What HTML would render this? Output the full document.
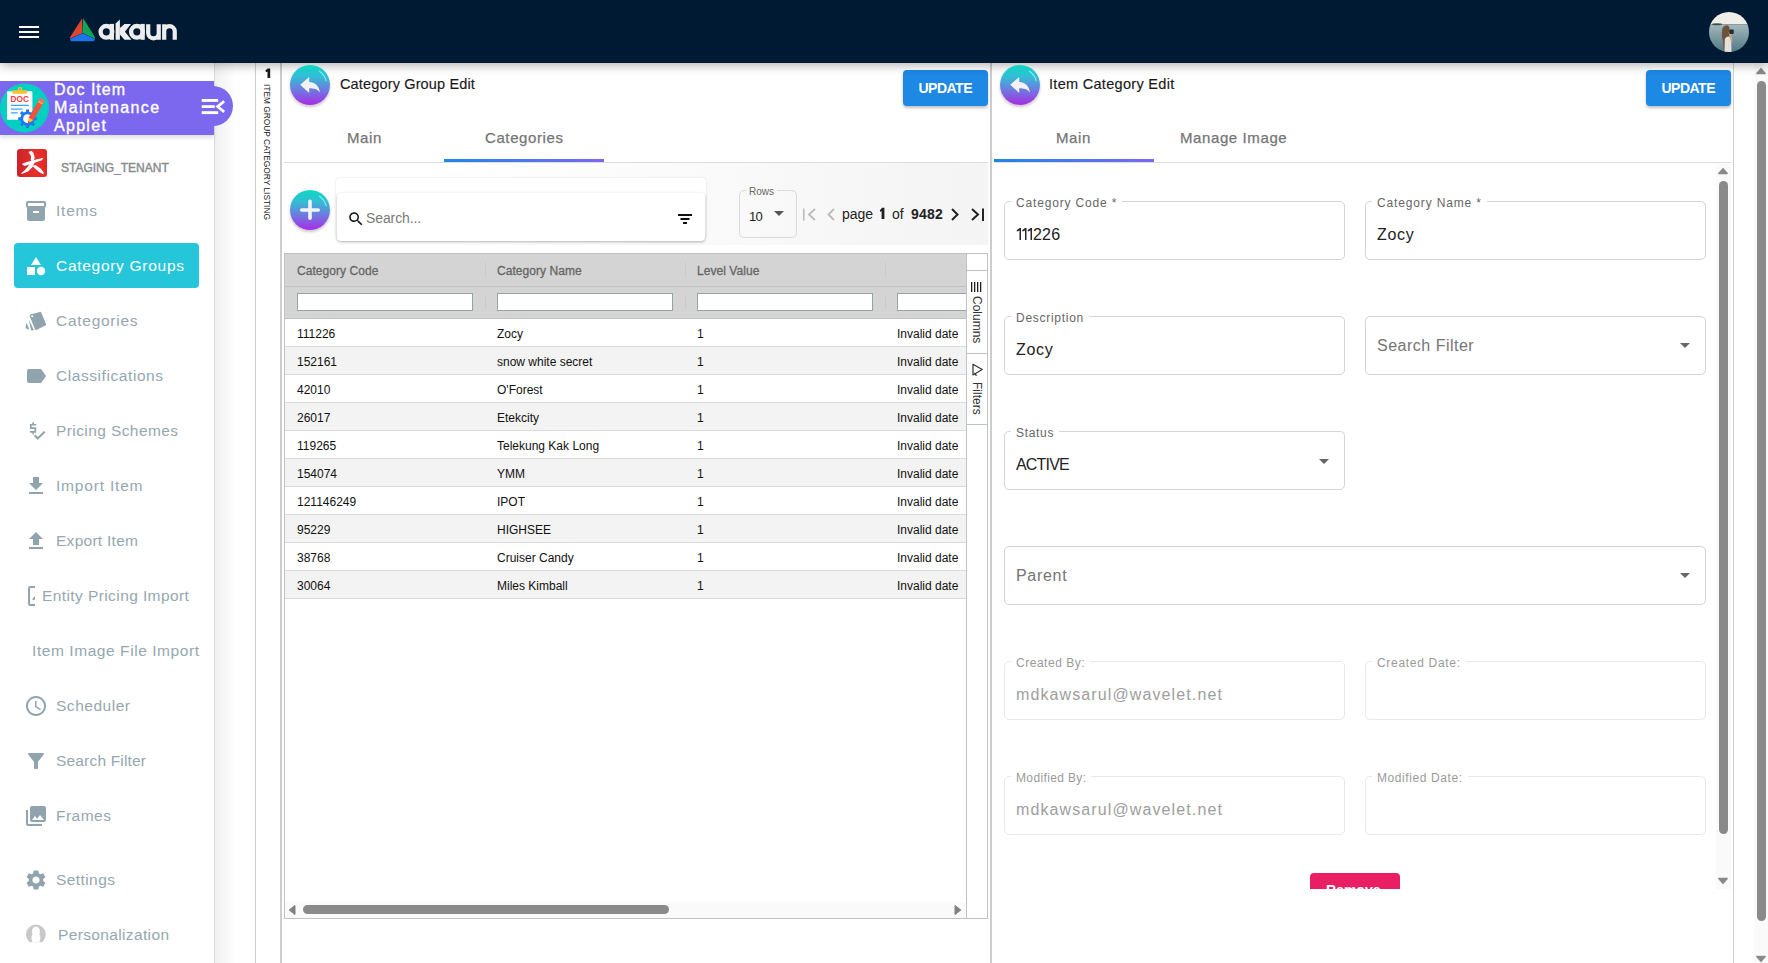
<!DOCTYPE html>
<html><head><meta charset="utf-8">
<style>
*{box-sizing:border-box;margin:0;padding:0}
html,body{width:1768px;height:963px;overflow:hidden;background:#fff;font-family:"Liberation Sans",sans-serif}
.a{position:absolute}
#hdr{position:absolute;left:0;top:0;width:1768px;height:63px;background:#011a33;z-index:5;box-shadow:0 2px 10px rgba(0,0,0,.32)}
#side{position:absolute;left:0;top:62px;width:215px;height:901px;background:#fff;border-right:1px solid #dcdcdc;z-index:2}
.nt{position:absolute;color:#95a7b0;font-size:15.5px;white-space:nowrap;line-height:20px}
.ni{position:absolute}
.g{position:absolute;white-space:nowrap;line-height:14px}
.gh{font-size:12px;color:#666;-webkit-text-stroke:0.3px #666;letter-spacing:0.05px}
.gc{font-size:12px;color:#111}
.fl{position:absolute;background:#fff;padding:0 5px;font-size:12px;color:#666;line-height:14px;white-space:nowrap}
.fv{position:absolute;font-size:16px;line-height:18px;white-space:nowrap}
</style></head><body>

<!-- HEADER -->
<div id="hdr">
  <div class="a" style="left:19px;top:26px;width:20px;height:2px;background:#fff"></div>
  <div class="a" style="left:19px;top:31px;width:20px;height:2px;background:#fff"></div>
  <div class="a" style="left:19px;top:36px;width:20px;height:2px;background:#fff"></div>
  <svg class="a" style="left:0;top:0" width="200" height="62" viewBox="0 0 200 62">
    <polygon points="82.2,18.3 82.6,33 70,38.8 69.8,37.5" fill="#dc4530"/>
    <polygon points="83.2,18.3 95.2,37.5 95,38.8 82.6,33" fill="#0ea75a"/>
    <polygon points="82.6,33.2 95,39 94,41.2 71,41.2 70,39" fill="#1f74ea"/>
    <g fill="none" stroke="#ededed" stroke-width="4.4">
      <circle cx="106.4" cy="31.8" r="5.8"/>
      <circle cx="136.9" cy="31.8" r="5.8"/>
      <path d="M148.2 24.2 V33 a5.27 5.27 0 0 0 10.55 0 V24.2 M158.75 32 V39.8" stroke-width="4.2"/>
      <path d="M164.2 39.8 V31.4 a5.27 5.27 0 0 1 10.55 0 V39.8 M164.2 32 V24.2" stroke-width="4.2"/>
    </g>
    <g fill="#ededed">
      <rect x="109.8" y="23.9" width="4.2" height="15.9"/>
      <rect x="140.5" y="23.9" width="4.3" height="15.9"/>
      <polygon points="115.6,23.6 119.9,19.5 119.9,39.8 115.6,39.8"/>
      <polygon points="119.9,28 124.5,23.9 131,23.9 124.9,31.8 131.5,39.8 124.5,39.8 119.9,34.5"/>
    </g>
  </svg>
  <svg class="a" style="left:1709px;top:12px" width="40" height="40" viewBox="0 0 40 40">
    <defs><clipPath id="av"><circle cx="20" cy="20" r="20"/></clipPath>
    <linearGradient id="sea" x1="0" y1="0" x2="0" y2="1"><stop offset="0" stop-color="#a3b9bd"/><stop offset="0.5" stop-color="#7898a0"/><stop offset="1" stop-color="#4f7884"/></linearGradient></defs>
    <g clip-path="url(#av)">
      <rect x="0" y="0" width="40" height="12.3" fill="#f1ede8"/>
      <rect x="0" y="12.3" width="40" height="28" fill="url(#sea)"/>
      <ellipse cx="8" cy="12.2" rx="5" ry="1" fill="#3e4f48"/>
      <path d="M15 40 L14 30 Q12 22 13.5 16 Q15 13 18 13.2 Q21 13.8 20.5 18 L21 40z" fill="#6e523d"/>
      <path d="M15.5 40 L15.8 27 Q17 24 20 24.5 Q22.5 26 22.3 30 L22.5 40z" fill="#e4dfdb"/>
      <path d="M19.5 20 Q21 26 22 30 L23.5 29.5 Q23 24 21.5 19z" fill="#c9a486"/>
      <rect x="20.2" y="17.5" width="4.6" height="4.5" rx="1.2" fill="#2b2b2b"/>
    </g>
  </svg>
</div>

<!-- SIDEBAR -->
<div id="side"></div>
<div class="a" style="left:0;top:81px;width:214px;height:54px;background:#7b68ee;z-index:3;box-shadow:0 3px 4px rgba(0,0,0,.12)"></div>
<div class="a" style="left:192.5px;top:85.7px;width:40.4px;height:40.4px;border-radius:50%;background:#7b68ee;z-index:3"></div>
<svg class="a" style="left:0;top:83px;z-index:4" width="50" height="50" viewBox="0 0 50 50">
  <circle cx="24.5" cy="24.9" r="24.5" fill="#00cfc2"/>
  <rect x="7" y="8.2" width="25.4" height="28.6" rx="0.8" fill="#fff"/>
  <rect x="12.4" y="7.3" width="14.6" height="3.4" rx="1.2" fill="#fdc02f"/>
  <circle cx="20" cy="6.4" r="2.4" fill="#fdc02f"/>
  <circle cx="20" cy="6.2" r="0.9" fill="#00cfc2"/>
  <text x="10.6" y="19.1" font-size="8.4" font-weight="bold" fill="#fb3b3b" font-family="Liberation Sans" textLength="18.4" lengthAdjust="spacingAndGlyphs">DOC</text>
  <rect x="10.8" y="21.8" width="18.1" height="1.3" rx="0.6" fill="#37a8f8"/>
  <rect x="10.8" y="25.4" width="11.9" height="1.3" rx="0.6" fill="#37a8f8"/>
  <rect x="10.8" y="29.2" width="7" height="1.3" rx="0.6" fill="#37a8f8"/>
  <polygon points="34.53,34.13 36.78,34.20 36.78,37.20 34.53,37.27 33.58,39.56 35.12,41.20 33.00,43.32 31.36,41.78 29.07,42.73 29.00,44.98 26.00,44.98 25.93,42.73 23.64,41.78 22.00,43.32 19.88,41.20 21.42,39.56 20.47,37.27 18.22,37.20 18.22,34.20 20.47,34.13 21.42,31.84 19.88,30.20 22.00,28.08 23.64,29.62 25.93,28.67 26.00,26.42 29.00,26.42 29.07,28.67 31.36,29.62 33.00,28.08 35.12,30.20 33.58,31.84" fill="#1a7bf2"/>
  <circle cx="27.5" cy="35.7" r="4.4" fill="#fff"/>
  <polygon points="44.24,18.53 39.76,15.87 28.42,34.97 32.89,37.63" fill="#f7513e"/>
  <polygon points="44.85,17.50 40.38,14.84 38.64,17.76 43.11,20.42" fill="#ff6b5f"/>
  <polygon points="43.11,20.42 38.64,17.76 37.93,18.97 42.40,21.62" fill="#fdc02f"/>
  <polygon points="33.14,37.20 28.67,34.54 28.10,40.60" fill="#fdc02f"/>
  <polygon points="30.23,39.31 28.22,38.11 28.10,40.60" fill="#f5222d"/>
</svg>
<div class="a" style="left:54px;top:81px;width:160px;color:#fff;-webkit-text-stroke:0.35px #fff;font-size:16px;line-height:18px;z-index:4;letter-spacing:1.0px">Doc Item<br><span style="letter-spacing:1.35px">Maintenance</span><br><span style="letter-spacing:1.3px">Applet</span></div>
<svg class="a" style="left:200px;top:97px;z-index:4" width="28" height="20" viewBox="0 0 28 20">
  <rect x="1.7" y="2" width="16.5" height="2.9" fill="#fff"/>
  <rect x="1.7" y="8.2" width="13" height="2.8" fill="#fff"/>
  <rect x="1.7" y="14.2" width="16.5" height="2.9" fill="#fff"/>
  <polyline points="24.2,4.3 17.6,9.6 24.2,14.9" fill="none" stroke="#fff" stroke-width="2.7"/>
</svg>

<!-- tenant -->
<div class="a" style="left:17px;top:149px;width:30px;height:28px;border-radius:3px;background:linear-gradient(to right,#cc2229,#e8302a 60%,#e42823);z-index:3"></div>
<svg class="a" style="left:17px;top:149px;z-index:3" width="30" height="28" viewBox="0 0 30 28">
  <polygon fill="#fff" points="11.5,3 14.5,1.8 16.5,4 17.8,9 16.5,12 13.8,11.5 14,7"/>
  <polygon fill="#fff" points="4.8,15 9,13.2 18,10.8 26.5,8.8 25,11.2 15.5,14.5 7.5,17"/>
  <polygon fill="#fff" points="14.5,11.5 18,12.5 15.5,18 11,22.5 6,24.5 3.6,24.8 8,21 12,16"/>
  <polygon fill="#fff" points="15,16.8 18.5,16 23.5,19.5 26.5,23 26.5,25.5 22,23 18,19.5"/>
</svg>
<div class="a" style="left:61px;top:159px;font-size:12px;color:#858b8e;-webkit-text-stroke:0.4px #858b8e;line-height:18px;z-index:3;letter-spacing:0px">STAGING_TENANT</div>

<!-- active -->
<div class="a" style="left:14px;top:243px;width:185px;height:45px;border-radius:4px;background:#26c6da;z-index:3"></div>

<svg class="ni" style="left:24px;top:199px;z-index:3" width="24" height="24" viewBox="0 0 24 24"><path fill="#90a4ae" d="M20 2H4c-1 0-2 .9-2 2v3.01c0 .72.43 1.34 1 1.69V20c0 1.1 1.1 2 2 2h14c.9 0 2-.9 2-2V8.7c.57-.35 1-.97 1-1.69V4c0-1.1-1-2-2-2zm-5 12H9v-2h6v2zm5-7H4V4l16-.02V7z"/></svg>
<div class="nt" style="left:56px;top:201px;z-index:3;letter-spacing:0.77px">Items</div>

<svg class="ni" style="left:24px;top:254px;z-index:4" width="24" height="24" viewBox="0 0 24 24"><path fill="#fff" d="M12 3l-5 8h10z"/><circle cx="17" cy="17" r="4.2" fill="#fff"/><rect x="3" y="13" width="8" height="8" fill="#fff"/></svg>
<div class="nt" style="left:56px;top:256px;z-index:4;color:#fff;letter-spacing:0.71px">Category Groups</div>

<svg class="ni" style="left:24px;top:309px;z-index:3" width="24" height="24" viewBox="0 0 24 24"><path fill="#90a4ae" d="M7 5.2 L15.8 2.9 Q17 2.6 17.4 3.7 L22 15 Q22.4 16 21.4 16.5 L12.4 20.9 Q11.4 21.3 11 20.3 L5.6 7 Q5.3 5.7 7 5.2z"/><circle cx="8.2" cy="7.3" r="1" fill="#fff"/><path fill="#90a4ae" d="M4.6 10.2 L10 21.3 L7.2 21.4 Z M2.5 13.5 L5.5 20.8 L1.5 19.3 Z"/></svg>
<div class="nt" style="left:56px;top:311px;z-index:3;letter-spacing:0.73px">Categories</div>

<svg class="ni" style="left:24px;top:364px;z-index:3" width="24" height="24" viewBox="0 0 24 24"><path fill="#90a4ae" d="M17.63 5.84C17.27 5.33 16.67 5 16 5L5 5.01C3.9 5.01 3 5.9 3 7v10c0 1.1.9 1.99 2 1.99L16 19c.67 0 1.27-.33 1.63-.84L22 12l-4.37-6.16z"/></svg>
<div class="nt" style="left:56px;top:366px;z-index:3;letter-spacing:0.57px">Classifications</div>

<svg class="ni" style="left:24px;top:419px;z-index:3" width="24" height="24" viewBox="0 0 24 24"><path fill="#90a4ae" d="M8.3 3.3h1.7v1.6h2.2v1.7H7.6v1.6h4.6v5.5H10v1.6H8.3v-1.6H6v-1.7h4.5V10H6V4.9h2.3z"/><polyline points="10.8,16.3 13.7,19.4 20.6,12.7" fill="none" stroke="#90a4ae" stroke-width="2.1"/></svg>
<div class="nt" style="left:56px;top:421px;z-index:3;letter-spacing:0.41px">Pricing Schemes</div>

<svg class="ni" style="left:24px;top:474px;z-index:3" width="24" height="24" viewBox="0 0 24 24"><path fill="#90a4ae" d="M19 9h-4V3H9v6H5l7 7 7-7zM5 18v2h14v-2H5z"/></svg>
<div class="nt" style="left:56px;top:476px;z-index:3;letter-spacing:0.81px">Import Item</div>

<svg class="ni" style="left:24px;top:529px;z-index:3" width="24" height="24" viewBox="0 0 24 24"><path fill="#90a4ae" d="M9 16h6v-6h4l-7-7-7 7h4zm-4 2h14v2H5z"/></svg>
<div class="nt" style="left:56px;top:531px;z-index:3;letter-spacing:0.27px">Export Item</div>

<svg class="ni" style="left:26px;top:583px;z-index:3" width="12" height="24" viewBox="0 0 12 24"><path fill="none" stroke="#90a4ae" stroke-width="2" d="M9 3.9H4.2Q3.05 3.9 3.05 5.1V20.8Q3.05 22 4.2 22H9"/><path fill="#90a4ae" d="M9 13.2C7.5 14.2 6.2 15.5 6.5 16.8C7 17.6 8.6 17.3 9 16Z"/></svg>
<div class="nt" style="left:42px;top:586px;z-index:3;letter-spacing:0.41px">Entity Pricing Import</div>

<div class="nt" style="left:32px;top:641px;z-index:3;letter-spacing:0.57px">Item Image File Import</div>

<svg class="ni" style="left:24px;top:694px;z-index:3" width="24" height="24" viewBox="0 0 24 24"><path fill="#90a4ae" d="M11.99 2C6.47 2 2 6.48 2 12s4.47 10 9.99 10C17.52 22 22 17.52 22 12S17.52 2 11.99 2zM12 20c-4.42 0-8-3.58-8-8s3.58-8 8-8 8 3.58 8 8-3.58 8-8 8zm.5-13H11v6l5.25 3.15.75-1.23-4.5-2.67z"/></svg>
<div class="nt" style="left:56px;top:696px;z-index:3;letter-spacing:0.52px">Scheduler</div>

<svg class="ni" style="left:24px;top:749px;z-index:3" width="24" height="24" viewBox="0 0 24 24"><path fill="#90a4ae" d="M4.25 5.61C6.27 8.2 10 13 10 13v6c0 .55.45 1 1 1h2c.55 0 1-.45 1-1v-6s3.72-4.8 5.74-7.39c.51-.66.04-1.61-.79-1.61H5.04c-.83 0-1.3.95-.79 1.61z"/></svg>
<div class="nt" style="left:56px;top:751px;z-index:3;letter-spacing:0.18px">Search Filter</div>

<svg class="ni" style="left:24px;top:804px;z-index:3" width="24" height="24" viewBox="0 0 24 24"><path fill="#90a4ae" d="M22 16V4c0-1.1-.9-2-2-2H8c-1.1 0-2 .9-2 2v12c0 1.1.9 2 2 2h12c1.1 0 2-.9 2-2zm-11-4l2.03 2.71L16 11l4 5H8l3-4zM2 6v14c0 1.1.9 2 2 2h14v-2H4V6H2z"/></svg>
<div class="nt" style="left:56px;top:806px;z-index:3;letter-spacing:0.49px">Frames</div>

<svg class="ni" style="left:24px;top:868px;z-index:3" width="24" height="24" viewBox="0 0 24 24"><path fill="#90a4ae" d="M19.14 12.94c.04-.3.06-.61.06-.94 0-.32-.02-.64-.07-.94l2.03-1.58c.18-.14.23-.41.12-.61l-1.920-3.32c-.12-.22-.37-.29-.59-.22l-2.39.96c-.5-.38-1.03-.7-1.62-.94l-.36-2.54c-.04-.24-.24-.41-.48-.41h-3.84c-.24 0-.43.17-.47.41l-.36 2.54c-.59.24-1.13.57-1.62.94l-2.39-.96c-.22-.08-.47 0-.59.22L2.74 8.87c-.12.21-.08.47.12.61l2.03 1.58c-.05.3-.09.63-.09.94s.02.64.07.94l-2.03 1.58c-.18.14-.23.41-.12.61l1.92 3.32c.12.22.37.29.59.22l2.39-.96c.5.38 1.03.7 1.62.94l.36 2.54c.05.24.24.41.48.41h3.84c.24 0 .44-.17.47-.41l.36-2.54c.59-.24 1.130-.56 1.62-.94l2.39.96c.22.08.47 0 .59-.22l1.92-3.32c.12-.22.07-.47-.12-.61l-2.01-1.58zM12 15.6c-1.98 0-3.6-1.62-3.6-3.6s1.62-3.6 3.6-3.6 3.6 1.62 3.6 3.6-1.62 3.6-3.6 3.6z"/></svg>
<div class="nt" style="left:56px;top:870px;z-index:3;letter-spacing:0.42px">Settings</div>

<svg class="ni" style="left:24px;top:923px;z-index:3" width="24" height="24" viewBox="0 0 24 24"><defs><clipPath id="pc"><rect x="0" y="0" width="24" height="19.2"/></clipPath></defs><g clip-path="url(#pc)"><circle cx="11.9" cy="11.4" r="9.9" fill="#c8c8c8"/><ellipse cx="11.9" cy="8.6" rx="4" ry="5" fill="#fff"/><path d="M8.3 11.5 H15.5 Q17 14.5 16 17 L14.8 21 H9 L7.8 17 Q6.8 14.5 8.3 11.5z" fill="#fff"/></g></svg>
<div class="nt" style="left:58px;top:925px;z-index:3;letter-spacing:0.36px">Personalization</div>

<!-- STRIP -->
<div class="a" style="left:215px;top:62px;width:41px;height:901px;background:linear-gradient(to right,#f0f0f0,#fff 50%)"></div>
<div class="a" style="left:255px;top:62px;width:1px;height:901px;background:#cfcfcf"></div>
<div class="a" style="left:280px;top:62px;width:2px;height:901px;background:#cdcdcd"></div>
<svg class="a" style="left:264px;top:67px" width="8" height="13" viewBox="0 0 8 13"><polygon points="1.4,3.6 3.6,1.5 6.2,1.5 6.2,11 3.5,11 3.5,4.5 2,5.3" fill="#1a1a1a"/></svg>
<div class="a" style="left:259px;top:84px;width:14px;height:140px">
  <div class="a" style="left:14px;top:0;transform-origin:0 0;transform:rotate(90deg) scaleX(0.88);font-size:9.5px;color:#222;white-space:nowrap;line-height:12px">ITEM GROUP CATEGORY LISTING</div>
</div>

<!-- LEFT PANEL -->
<div class="a" style="z-index:6;left:290px;top:65px;width:40px;height:40px;border-radius:50%;background:linear-gradient(#0cd9c2,#35bcd6 30%,#6a7fe0 60%,#a92ce6);box-shadow:0 2px 3px rgba(0,0,0,.22)"></div><svg class="a" style="z-index:7;left:290px;top:65px" width="40" height="40" viewBox="0 0 40 40"><path d="M29.5 6.2 A17 17 0 0 1 36.2 15.8" fill="none" stroke="rgba(150,255,250,.75)" stroke-width="1.1" stroke-linecap="round"/></svg>
<svg class="a" style="z-index:7;left:299px;top:75px" width="22" height="20" viewBox="0 0 22 20"><path fill="#f2f2f2" d="M1.2 9.7 L10.2 2 V7 C15.5 7.2 20.2 10.5 20.9 17.4 C18.3 14 14.8 13.3 10.2 13.3 V17.9 Z"/></svg>
<div class="a" style="left:340px;top:76px;font-size:14.5px;color:#1a1a1a;-webkit-text-stroke:0.15px #1a1a1a;line-height:16px;letter-spacing:0.15px">Category Group Edit</div>

<div class="a" style="left:903px;top:70px;width:85px;height:36px;border-radius:4px;background:#1e88e5;box-shadow:0 2px 3px rgba(0,0,0,.25);color:#fff;font-weight:bold;font-size:14px;line-height:36px;text-align:center;letter-spacing:-0.5px;text-indent:-0.5px">UPDATE</div>

<div class="a" style="left:347px;top:130px;font-size:15px;color:#757575;-webkit-text-stroke:0.25px #757575;line-height:16px;letter-spacing:0.6px">Main</div>
<div class="a" style="left:485px;top:130px;font-size:15px;color:#757575;-webkit-text-stroke:0.25px #757575;line-height:16px;letter-spacing:0.6px">Categories</div>
<div class="a" style="left:284px;top:162px;width:704px;height:1px;background:#dcdcdc"></div>
<div class="a" style="left:444px;top:159px;width:160px;height:3px;background:linear-gradient(to right,#1e88e5,#7b68ee)"></div>

<!-- toolbar bg -->
<div class="a" style="left:284px;top:163px;width:704px;height:82px;background:linear-gradient(to right,#fff 25%,#f4f4f4)"></div>
<div class="a" style="left:290px;top:190px;width:40px;height:40px;border-radius:50%;background:linear-gradient(#0cd9c2,#35bcd6 30%,#6a7fe0 60%,#a92ce6);box-shadow:0 2px 3px rgba(0,0,0,.22)"></div><svg class="a" style="left:290px;top:190px" width="40" height="40" viewBox="0 0 40 40"><path d="M29.5 6.2 A17 17 0 0 1 36.2 15.8" fill="none" stroke="rgba(150,255,250,.75)" stroke-width="1.1" stroke-linecap="round"/></svg>
<svg class="a" style="left:290px;top:190px" width="40" height="40" viewBox="0 0 40 40"><path d="M20 11.2 V28.3 M11.8 20 H28.2" stroke="#f3f3f3" stroke-width="3.6" stroke-linecap="round"/></svg>


<div class="a" style="left:336px;top:178px;width:370px;height:60px;border-radius:4px;background:#fff;box-shadow:0 0 2px rgba(0,0,0,.15)"></div>
<div class="a" style="left:337px;top:193px;width:368px;height:48px;border-radius:4px;background:#fff;box-shadow:0 1px 3px rgba(0,0,0,.3)"></div>
<svg class="a" style="left:347px;top:210px" width="18" height="18" viewBox="0 0 24 24"><path fill="#111" d="M15.5 14h-.79l-.28-.27C15.41 12.59 16 11.11 16 9.5 16 5.91 13.09 3 9.5 3S3 5.91 3 9.5 5.91 16 9.5 16c1.61 0 3.09-.59 4.23-1.57l.27.28v.79l5 4.99L20.49 19l-4.99-5zm-6 0C7.01 14 5 11.99 5 9.5S7.01 5 9.5 5 14 7.01 14 9.5 11.99 14 9.5 14z"/></svg>
<div class="a" style="left:366px;top:210px;font-size:14px;color:#7a7a7a;line-height:16px;letter-spacing:-0.1px">Search...</div>
<svg class="a" style="left:675px;top:207px" width="20" height="24" viewBox="0 0 20 24"><rect x="3" y="7" width="14" height="2" fill="#111"/><rect x="5.5" y="11" width="9" height="2" fill="#111"/><rect x="8" y="15" width="4" height="2" fill="#111"/></svg>

<!-- rows select -->
<div class="a" style="left:739px;top:190px;width:58px;height:48px;border:1px solid #dadada;border-radius:5px"></div>
<div class="a" style="left:746px;top:186px;padding:0 3px;background:#f9f9f9;font-size:10px;color:#666;line-height:12px">Rows</div>
<div class="a" style="left:749px;top:209px;font-size:13px;color:#222;line-height:16px;letter-spacing:-0.8px">10</div>
<svg class="a" style="left:773px;top:210px" width="12" height="7" viewBox="0 0 12 7"><path d="M1 1h10L6 6z" fill="#555"/></svg>

<!-- pagination -->
<svg class="a" style="left:801px;top:206px" width="190" height="18" viewBox="0 0 190 18">
  <rect x="2" y="2.5" width="1.6" height="12" fill="#bbb"/>
  <polyline points="14,3 8,8.5 14,14" fill="none" stroke="#bbb" stroke-width="1.8"/>
  <polyline points="33,3 27.5,8.5 33,14" fill="none" stroke="#bbb" stroke-width="1.8"/>
  <polyline points="151,3 156.5,8.5 151,14" fill="none" stroke="#222" stroke-width="2"/>
  <polyline points="171,3 177,8.5 171,14" fill="none" stroke="#222" stroke-width="2"/>
  <rect x="181" y="2.5" width="2" height="12.5" fill="#222"/>
</svg>
<div class="a" style="left:842px;top:206px;font-size:14px;color:#222;line-height:16px;white-space:nowrap">page</div>
<svg class="a" style="left:878px;top:206px" width="8" height="14" viewBox="0 0 8 14"><polygon points="1.9,4.2 4.1,1.7 6.4,1.7 6.4,13 3.6,13 3.6,5.1 2.3,5.9" fill="#1f1f1f"/></svg>
<div class="a" style="left:892px;top:206px;font-size:14px;color:#222;line-height:16px">of</div>
<div class="a" style="left:911px;top:206px;font-size:14px;font-weight:bold;color:#222;line-height:16px;letter-spacing:0.2px">9482</div>

<!-- GRID -->
<div class="a" style="left:284px;top:253px;width:704px;height:666px;border:1px solid #bdc3c7;background:#fff"></div>
<div class="a" style="left:285px;top:254px;width:681px;height:32px;background:#d4d4d4"></div>
<div class="a" style="left:285px;top:286px;width:681px;height:1px;background:#bdc3c7"></div>
<div class="a" style="left:285px;top:287px;width:681px;height:31px;background:#d4d4d4"></div>
<div class="a" style="left:285px;top:318px;width:681px;height:1px;background:#bdc3c7"></div>
<div class="g gh" style="left:297px;top:264px">Category Code</div>
<div class="a" style="left:297px;top:293px;width:176px;height:18px;background:#fff;border:1px solid #95a5a6"></div>
<div class="a" style="left:485px;top:262px;width:1px;height:16px;background:rgba(189,195,199,.5)"></div>
<div class="a" style="left:485px;top:295px;width:1px;height:14px;background:rgba(189,195,199,.5)"></div>
<div class="g gh" style="left:497px;top:264px">Category Name</div>
<div class="a" style="left:497px;top:293px;width:176px;height:18px;background:#fff;border:1px solid #95a5a6"></div>
<div class="a" style="left:685px;top:262px;width:1px;height:16px;background:rgba(189,195,199,.5)"></div>
<div class="a" style="left:685px;top:295px;width:1px;height:14px;background:rgba(189,195,199,.5)"></div>
<div class="g gh" style="left:697px;top:264px">Level Value</div>
<div class="a" style="left:697px;top:293px;width:176px;height:18px;background:#fff;border:1px solid #95a5a6"></div>
<div class="a" style="left:885px;top:262px;width:1px;height:16px;background:rgba(189,195,199,.5)"></div>
<div class="a" style="left:885px;top:295px;width:1px;height:14px;background:rgba(189,195,199,.5)"></div>
<div class="g gh" style="left:897px;top:264px"></div>
<div class="a" style="left:897px;top:293px;width:69px;height:18px;background:#fff;border:1px solid #95a5a6;border-right:0"></div>
<div class="a" style="left:285px;top:319px;width:681px;height:28px;background:#fff;border-bottom:1px solid #d9dcde"></div>
<div class="g gc" style="left:297px;top:327px">111226</div>
<div class="g gc" style="left:497px;top:327px">Zocy</div>
<div class="g gc" style="left:697px;top:327px">1</div>
<div class="g gc" style="left:897px;top:327px">Invalid date</div>
<div class="a" style="left:285px;top:347px;width:681px;height:28px;background:#f3f3f3;border-bottom:1px solid #d9dcde"></div>
<div class="g gc" style="left:297px;top:355px">152161</div>
<div class="g gc" style="left:497px;top:355px">snow white secret</div>
<div class="g gc" style="left:697px;top:355px">1</div>
<div class="g gc" style="left:897px;top:355px">Invalid date</div>
<div class="a" style="left:285px;top:375px;width:681px;height:28px;background:#fff;border-bottom:1px solid #d9dcde"></div>
<div class="g gc" style="left:297px;top:383px">42010</div>
<div class="g gc" style="left:497px;top:383px">O'Forest</div>
<div class="g gc" style="left:697px;top:383px">1</div>
<div class="g gc" style="left:897px;top:383px">Invalid date</div>
<div class="a" style="left:285px;top:403px;width:681px;height:28px;background:#f3f3f3;border-bottom:1px solid #d9dcde"></div>
<div class="g gc" style="left:297px;top:411px">26017</div>
<div class="g gc" style="left:497px;top:411px">Etekcity</div>
<div class="g gc" style="left:697px;top:411px">1</div>
<div class="g gc" style="left:897px;top:411px">Invalid date</div>
<div class="a" style="left:285px;top:431px;width:681px;height:28px;background:#fff;border-bottom:1px solid #d9dcde"></div>
<div class="g gc" style="left:297px;top:439px">119265</div>
<div class="g gc" style="left:497px;top:439px">Telekung Kak Long</div>
<div class="g gc" style="left:697px;top:439px">1</div>
<div class="g gc" style="left:897px;top:439px">Invalid date</div>
<div class="a" style="left:285px;top:459px;width:681px;height:28px;background:#f3f3f3;border-bottom:1px solid #d9dcde"></div>
<div class="g gc" style="left:297px;top:467px">154074</div>
<div class="g gc" style="left:497px;top:467px">YMM</div>
<div class="g gc" style="left:697px;top:467px">1</div>
<div class="g gc" style="left:897px;top:467px">Invalid date</div>
<div class="a" style="left:285px;top:487px;width:681px;height:28px;background:#fff;border-bottom:1px solid #d9dcde"></div>
<div class="g gc" style="left:297px;top:495px">121146249</div>
<div class="g gc" style="left:497px;top:495px">IPOT</div>
<div class="g gc" style="left:697px;top:495px">1</div>
<div class="g gc" style="left:897px;top:495px">Invalid date</div>
<div class="a" style="left:285px;top:515px;width:681px;height:28px;background:#f3f3f3;border-bottom:1px solid #d9dcde"></div>
<div class="g gc" style="left:297px;top:523px">95229</div>
<div class="g gc" style="left:497px;top:523px">HIGHSEE</div>
<div class="g gc" style="left:697px;top:523px">1</div>
<div class="g gc" style="left:897px;top:523px">Invalid date</div>
<div class="a" style="left:285px;top:543px;width:681px;height:28px;background:#fff;border-bottom:1px solid #d9dcde"></div>
<div class="g gc" style="left:297px;top:551px">38768</div>
<div class="g gc" style="left:497px;top:551px">Cruiser Candy</div>
<div class="g gc" style="left:697px;top:551px">1</div>
<div class="g gc" style="left:897px;top:551px">Invalid date</div>
<div class="a" style="left:285px;top:571px;width:681px;height:28px;background:#f3f3f3;border-bottom:1px solid #d9dcde"></div>
<div class="g gc" style="left:297px;top:579px">30064</div>
<div class="g gc" style="left:497px;top:579px">Miles Kimball</div>
<div class="g gc" style="left:697px;top:579px">1</div>
<div class="g gc" style="left:897px;top:579px">Invalid date</div>
<div class="a" style="left:966px;top:254px;width:21px;height:664px;background:#fff;border-left:1px solid #bdc3c7"></div>
<div class="a" style="left:966px;top:270px;width:21px;height:1px;background:#bdc3c7"></div>
<div class="a" style="left:966px;top:353px;width:21px;height:1px;background:#bdc3c7"></div>
<div class="a" style="left:966px;top:424px;width:21px;height:1px;background:#bdc3c7"></div>
<svg class="a" style="left:970px;top:281px" width="12" height="12" viewBox="0 0 12 12"><rect x="1" y="1" width="1.3" height="10" fill="#222"/><rect x="4" y="1" width="1.3" height="10" fill="#222"/><rect x="7" y="1" width="1.3" height="10" fill="#222"/><rect x="10" y="1" width="1.3" height="10" fill="#222"/></svg>
<div class="a" style="left:984px;top:296px;transform-origin:0 0;transform:rotate(90deg);font-size:12px;color:#333;line-height:14px;white-space:nowrap">Columns</div>
<svg class="a" style="left:972px;top:363px" width="12" height="14" viewBox="0 0 12 14"><path d="M1 1.2 L10.2 6.6 L1 12 Z" fill="none" stroke="#333" stroke-width="1.2" stroke-linejoin="round"/><path d="M1.5 9 L5.5 12.5 L3.5 12.8z" fill="#333"/></svg>
<div class="a" style="left:984px;top:382px;transform-origin:0 0;transform:rotate(90deg);font-size:12px;color:#333;line-height:14px;white-space:nowrap">Filters</div>
<div class="a" style="left:285px;top:902px;width:681px;height:16px;background:#fafafa"></div>
<svg class="a" style="left:287px;top:904px" width="10" height="12" viewBox="0 0 10 12"><path d="M8 1.5 L2.2 6 L8 10.5z" fill="#808080" stroke="#808080" stroke-width="1" stroke-linejoin="round"/></svg>
<svg class="a" style="left:953px;top:904px" width="10" height="12" viewBox="0 0 10 12"><path d="M2 1.5 L7.8 6 L2 10.5z" fill="#808080" stroke="#808080" stroke-width="1" stroke-linejoin="round"/></svg>
<div class="a" style="left:303px;top:905px;width:366px;height:9px;border-radius:5px;background:#8a8a8a"></div>
<!-- RIGHT PANEL -->
<div class="a" style="left:990px;top:62px;width:2px;height:901px;background:#cdcdcd"></div>
<div class="a" style="left:1733px;top:62px;width:1px;height:901px;background:#d0d0d0"></div>
<div class="a" style="z-index:6;left:1000px;top:65px;width:40px;height:40px;border-radius:50%;background:linear-gradient(#0cd9c2,#35bcd6 30%,#6a7fe0 60%,#a92ce6);box-shadow:0 2px 3px rgba(0,0,0,.22)"></div><svg class="a" style="z-index:7;left:1000px;top:65px" width="40" height="40" viewBox="0 0 40 40"><path d="M29.5 6.2 A17 17 0 0 1 36.2 15.8" fill="none" stroke="rgba(150,255,250,.75)" stroke-width="1.1" stroke-linecap="round"/></svg>
<svg class="a" style="z-index:7;left:1009px;top:75px" width="22" height="20" viewBox="0 0 22 20"><path fill="#f2f2f2" d="M1.2 9.7 L10.2 2 V7 C15.5 7.2 20.2 10.5 20.9 17.4 C18.3 14 14.8 13.3 10.2 13.3 V17.9 Z"/></svg>
<div class="a" style="left:1049px;top:76px;font-size:14.5px;color:#1a1a1a;-webkit-text-stroke:0.15px #1a1a1a;line-height:16px;letter-spacing:0.3px">Item Category Edit</div>
<div class="a" style="left:1646px;top:70px;width:85px;height:36px;border-radius:4px;background:#1e88e5;box-shadow:0 2px 3px rgba(0,0,0,.25);color:#fff;font-weight:bold;font-size:14px;line-height:36px;text-align:center;letter-spacing:-0.5px;text-indent:-0.5px">UPDATE</div>

<div class="a" style="left:1056px;top:130px;font-size:15px;color:#757575;-webkit-text-stroke:0.25px #757575;line-height:16px;letter-spacing:0.6px">Main</div>
<div class="a" style="left:1180px;top:130px;font-size:15px;color:#757575;-webkit-text-stroke:0.25px #757575;line-height:16px;letter-spacing:0.6px">Manage Image</div>
<div class="a" style="left:994px;top:162px;width:737px;height:1px;background:#dcdcdc"></div>
<div class="a" style="left:994px;top:159px;width:160px;height:3px;background:linear-gradient(to right,#1e88e5,#7b68ee)"></div>

<!-- inner scrollbar -->
<div class="a" style="left:1716px;top:164px;width:15px;height:725px;background:#fafafa"></div>
<svg class="a" style="left:1717px;top:167px" width="12" height="8" viewBox="0 0 12 8"><path d="M1.8 6.5h8.4L6 1.6z" fill="#8a8a8a" stroke="#8a8a8a" stroke-width="1.4" stroke-linejoin="round"/></svg>
<div class="a" style="left:1719px;top:181px;width:9px;height:653px;border-radius:5px;background:#8a8a8a"></div>
<svg class="a" style="left:1717px;top:877px" width="12" height="8" viewBox="0 0 12 8"><path d="M1.8 1.5h8.4L6 6.4z" fill="#8a8a8a" stroke="#8a8a8a" stroke-width="1.4" stroke-linejoin="round"/></svg>

<!-- page scrollbar -->
<div class="a" style="left:1754px;top:62px;width:14px;height:901px;background:#fafafa"></div>
<svg class="a" style="left:1755px;top:67px" width="12" height="8" viewBox="0 0 12 8"><path d="M1.8 6.5h8.4L6 1.6z" fill="#8a8a8a" stroke="#8a8a8a" stroke-width="1.4" stroke-linejoin="round"/></svg>
<div class="a" style="left:1757px;top:81px;width:9px;height:840px;border-radius:5px;background:#8a8a8a"></div>
<svg class="a" style="left:1755px;top:955px" width="12" height="8" viewBox="0 0 12 8"><path d="M1.8 1.5h8.4L6 6.4z" fill="#8a8a8a" stroke="#8a8a8a" stroke-width="1.4" stroke-linejoin="round"/></svg>

<div class="a" style="left:1004px;top:201px;width:341px;height:59px;border:1px solid #d4d4d4;border-radius:5px"></div>
<div class="fl" style="left:1011px;top:196px;color:#666;letter-spacing:0.84px">Category Code *</div>
<svg class="a" style="left:1016px;top:226px" width="18" height="16" viewBox="0 0 18 16"><polygon points="0.6,4.3 3.5,2 5.0,2 5.0,14 3.5,14 3.5,4.4 1.0,5.5" fill="#2a2a2a"/><polygon points="6.1,4.3 9.0,2 10.5,2 10.5,14 9.0,14 9.0,4.4 6.5,5.5" fill="#2a2a2a"/><polygon points="11.6,4.3 14.5,2 16.0,2 16.0,14 14.5,14 14.5,4.4 12.0,5.5" fill="#2a2a2a"/></svg><div class="fv" style="left:1033px;top:226px;color:#222;letter-spacing:0.2px">226</div>
<div class="a" style="left:1365px;top:201px;width:341px;height:59px;border:1px solid #d4d4d4;border-radius:5px"></div>
<div class="fl" style="left:1372px;top:196px;color:#666;letter-spacing:0.85px">Category Name *</div>
<div class="fv" style="left:1377px;top:226px;color:#222;letter-spacing:0.7px">Zocy</div>
<div class="a" style="left:1004px;top:316px;width:341px;height:59px;border:1px solid #d4d4d4;border-radius:5px"></div>
<div class="fl" style="left:1011px;top:311px;color:#666;letter-spacing:0.72px">Description</div>
<div class="fv" style="left:1016px;top:341px;color:#222;letter-spacing:0.7px">Zocy</div>
<div class="a" style="left:1365px;top:316px;width:341px;height:59px;border:1px solid #d4d4d4;border-radius:5px"></div>
<div class="fv" style="left:1377px;top:337px;color:#757575;letter-spacing:0.5px">Search Filter</div>
<svg class="a" style="left:1679px;top:342px" width="12" height="7" viewBox="0 0 12 7"><path d="M1 1h10L6 6z" fill="#666"/></svg>
<div class="a" style="left:1004px;top:431px;width:341px;height:59px;border:1px solid #d4d4d4;border-radius:5px"></div>
<div class="fl" style="left:1011px;top:426px;color:#666;letter-spacing:0.68px">Status</div>
<div class="fv" style="left:1016px;top:456px;color:#222;letter-spacing:-0.82px">ACTIVE</div>
<svg class="a" style="left:1318px;top:458px" width="12" height="7" viewBox="0 0 12 7"><path d="M1 1h10L6 6z" fill="#666"/></svg>
<div class="a" style="left:1004px;top:546px;width:702px;height:59px;border:1px solid #d4d4d4;border-radius:5px"></div>
<div class="fv" style="left:1016px;top:567px;color:#757575;letter-spacing:0.69px">Parent</div>
<svg class="a" style="left:1679px;top:572px" width="12" height="7" viewBox="0 0 12 7"><path d="M1 1h10L6 6z" fill="#666"/></svg>
<div class="a" style="left:1004px;top:661px;width:341px;height:59px;border:1px solid #e9e9e9;border-radius:5px"></div>
<div class="fl" style="left:1011px;top:656px;color:#9a9a9a;letter-spacing:0.52px">Created By:</div>
<div class="fv" style="left:1016px;top:686px;color:#9e9e9e;letter-spacing:1.11px">mdkawsarul@wavelet.net</div>
<div class="a" style="left:1365px;top:661px;width:341px;height:59px;border:1px solid #e9e9e9;border-radius:5px"></div>
<div class="fl" style="left:1372px;top:656px;color:#9a9a9a;letter-spacing:0.69px">Created Date:</div>
<div class="a" style="left:1004px;top:776px;width:341px;height:59px;border:1px solid #e9e9e9;border-radius:5px"></div>
<div class="fl" style="left:1011px;top:771px;color:#9a9a9a;letter-spacing:0.36px">Modified By:</div>
<div class="fv" style="left:1016px;top:801px;color:#9e9e9e;letter-spacing:1.11px">mdkawsarul@wavelet.net</div>
<div class="a" style="left:1365px;top:776px;width:341px;height:59px;border:1px solid #e9e9e9;border-radius:5px"></div>
<div class="fl" style="left:1372px;top:771px;color:#9a9a9a;letter-spacing:0.59px">Modified Date:</div>
<div class="a" style="left:1310px;top:873px;width:90px;height:16px;border-radius:4px 4px 0 0;background:#e91e63;overflow:hidden"><div style="position:absolute;left:16px;top:9px;color:#fff;font-size:14px;font-weight:bold;line-height:16px">Remove</div></div>
</body></html>
